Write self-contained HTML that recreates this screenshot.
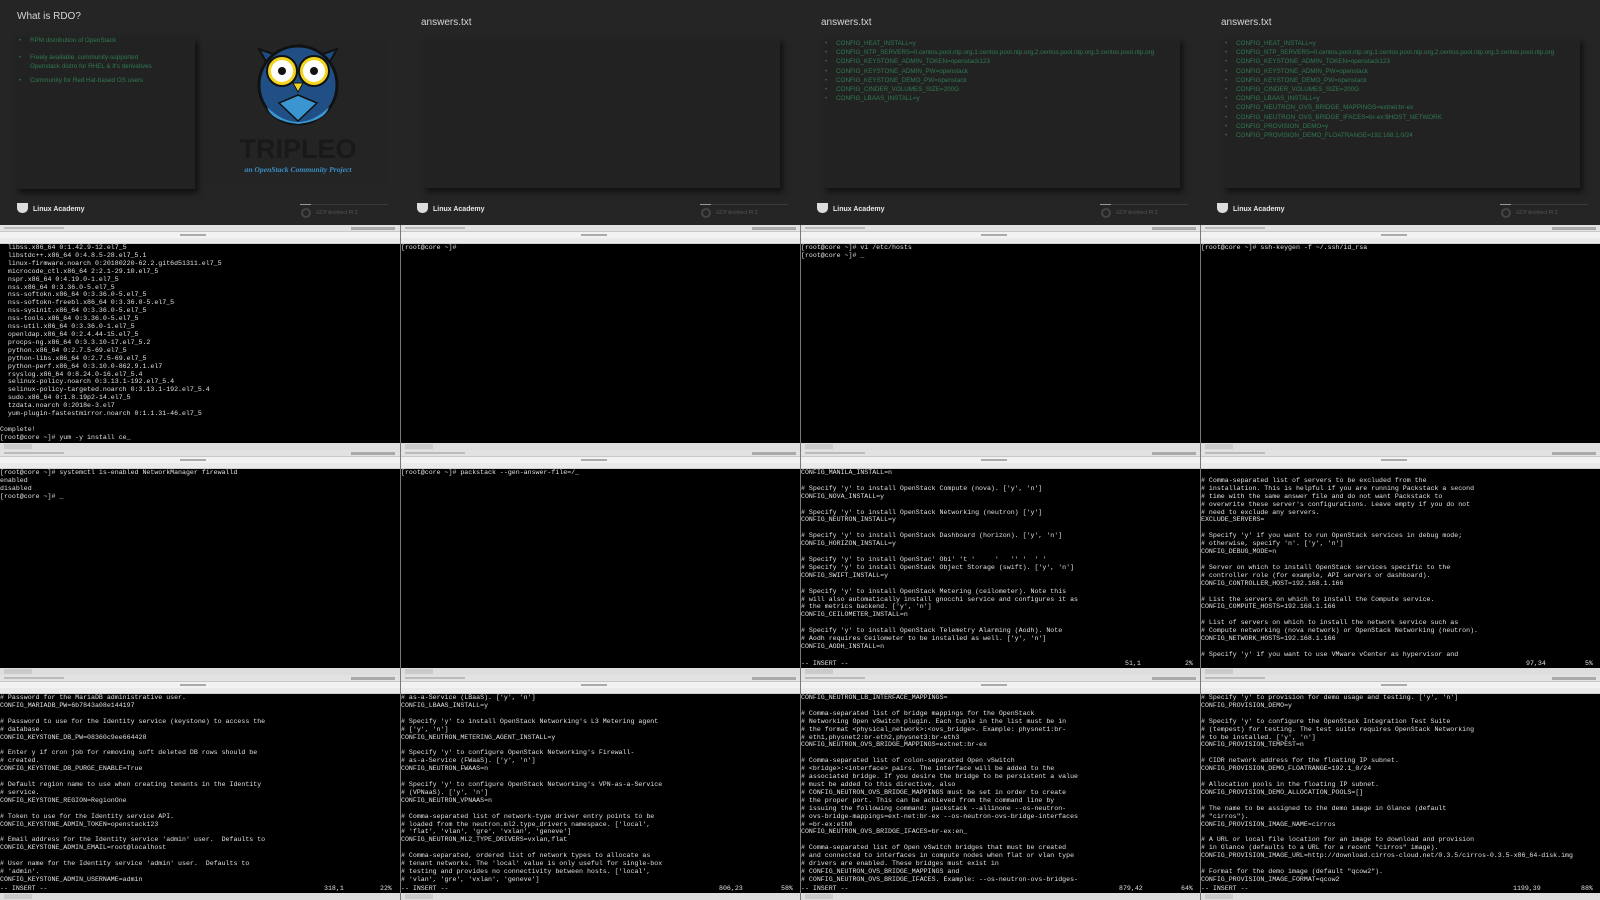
<!DOCTYPE html>
<html><head><meta charset="utf-8">
<style>
*{margin:0;padding:0;box-sizing:border-box}
body{width:1600px;height:900px;background:#000;overflow:hidden;font-family:"Liberation Sans",sans-serif;position:relative}
.cell{position:absolute;width:400px;height:225px;overflow:hidden}
.slide{background:#252525}
.title{position:absolute;left:17px;top:11px;font-size:10px;color:#d5d5d5}
.box{position:absolute;background:#222;box-shadow:3px 4px 6px rgba(0,0,0,.6)}
.bl{position:absolute;left:0;font-size:6.3px;color:#2f7a52;white-space:nowrap}
.bl:before{content:"•";position:absolute;left:-11px;color:#3a6a50}
.la{position:absolute;left:17px;top:204px;font-size:7px;font-weight:bold;color:#e8e8e8}
.la i{display:inline-block;width:11px;height:10px;background:#ddd;border-radius:0 0 5px 5px;vertical-align:middle;margin-right:5px;position:relative;top:-1px}
.gcp{position:absolute;left:300px;top:204px;width:88px;border-top:1px solid #3a3a3a}
.gcp:before{content:"";position:absolute;left:0;top:-1px;width:11px;border-top:1px solid #999}
.gcp span{position:absolute;left:16px;top:5px;font-size:5px;color:#555;white-space:nowrap}
.gcp b{position:absolute;left:1px;top:3px;width:10px;height:10px;border-radius:50%;border:2px solid #444}
.term{background:#000}
.tp{position:absolute;left:0;top:0;width:400px;height:7px;background:#e2e2e2;border-bottom:1px solid #c8c8c8}
.tt{position:absolute;left:0;top:7px;width:400px;height:6px;background:#f2f2f2}
.tm{position:absolute;left:0;top:13px;width:400px;height:6px;background:#eaeaea;border-bottom:1px solid #d0d0d0}
.tb{position:absolute;left:0;bottom:0;width:400px;height:7px;background:#dedede}
.tb:before{content:"";position:absolute;left:4px;top:1px;width:28px;height:5px;background:#cacaca}
.tt:before{content:"";position:absolute;left:180px;top:2px;width:26px;height:2px;background:#aaa}
.tp:before{content:"";position:absolute;left:4px;top:2px;width:60px;height:2px;background:#bbb}
.tp:after{content:"";position:absolute;right:5px;top:2px;width:44px;height:3px;background:#aaa}
.tx{position:absolute;left:0;top:19px;width:400px;height:199px;font-family:"Liberation Mono",monospace;font-size:6.6px;line-height:7.9px;color:#e0e0e0;white-space:pre;overflow:hidden}
.vl{border-left:1px solid #777}
.st{position:absolute;left:0;bottom:0;width:400px;height:7.9px}
.st span{position:absolute;top:0}
</style></head><body>

<!-- Row 1 slides -->
<div class="cell slide" style="left:0;top:0">
  <div class="title">What is RDO?</div>
  <div class="box" style="left:15px;top:37px;width:180px;height:152px">
    <div class="bl" style="left:15px;top:0px">RPM distribution of OpenStack</div>
    <div class="bl" style="left:15px;top:16px;line-height:9px">Freely available, community-supported<br>Openstack distro for RHEL &amp; it's derivatives</div>
    <div class="bl" style="left:15px;top:40px">Community for Red Hat-based OS users</div>
  </div>
  <div class="box" style="left:207px;top:37px;width:181px;height:152px;background:#242424;box-shadow:none">
    <svg width="181" height="152" viewBox="0 0 181 152" style="position:absolute;left:0;top:0">
      <path d="M52 12 L62 30 L80 22 Z" fill="#1d4d80" stroke="#111" stroke-width="2"/>
      <path d="M130 12 L120 30 L102 22 Z" fill="#1d4d80" stroke="#111" stroke-width="2"/>
      <circle cx="91" cy="48" r="39" fill="#1f4f85" stroke="#111" stroke-width="3"/>
      <path d="M60 70 Q91 100 122 70 Q118 84 91 87 Q64 84 60 70Z" fill="#3a95d0"/>
      <path d="M72 66 L91 84 L110 66 L91 58Z" fill="#3a95d0" stroke="#111" stroke-width="1.5"/>
      <circle cx="75" cy="34" r="15" fill="#f2d51f" stroke="#111" stroke-width="2"/>
      <circle cx="107" cy="34" r="15" fill="#f2d51f" stroke="#111" stroke-width="2"/>
      <circle cx="75" cy="34" r="11" fill="#fff"/><circle cx="107" cy="34" r="11" fill="#fff"/>
      <circle cx="75" cy="34" r="4" fill="#111"/><circle cx="107" cy="34" r="4" fill="#111"/>
      <path d="M86 46 L96 46 L91 55Z" fill="#f2d51f" stroke="#111" stroke-width="1"/>
      <text x="91" y="121" text-anchor="middle" font-family="Liberation Sans" font-weight="bold" font-size="27" fill="#191919">TRIPLEO</text>
      <text x="91" y="135" text-anchor="middle" font-family="Liberation Serif" font-style="italic" font-weight="bold" font-size="7.6" fill="#3a8fc4">an OpenStack Community Project</text>
    </svg>
  </div>
  <div class="la"><i></i>Linux Academy</div>
  <div class="gcp"><b></b><span>GCP Architect Pt 2</span></div>
</div>

<div class="cell slide" style="left:400px;top:0">
  <div class="title" style="left:21px;top:17px">answers.txt</div>
  <div class="box" style="left:23px;top:38px;width:357px;height:150px"></div>
  <div class="la"><i></i>Linux Academy</div>
  <div class="gcp"><b></b><span>GCP Architect Pt 2</span></div>
</div>

<div class="cell slide" style="left:800px;top:0">
  <div class="title" style="left:21px;top:17px">answers.txt</div>
  <div class="box" style="left:23px;top:38px;width:357px;height:150px">
    <div style="position:absolute;left:13px;top:1px;width:340px;font-size:6.1px;line-height:9.2px;color:#2f7a52">
      <div class="bl" style="position:relative;white-space:normal">CONFIG_HEAT_INSTALL=y</div>
      <div class="bl" style="position:relative;white-space:normal">CONFIG_NTP_SERVERS=0.centos.pool.ntp.org,1.centos.pool.ntp.org,2.centos.pool.ntp.org,3.centos.pool.ntp.org</div>
      <div class="bl" style="position:relative">CONFIG_KEYSTONE_ADMIN_TOKEN=openstack123</div>
      <div class="bl" style="position:relative">CONFIG_KEYSTONE_ADMIN_PW=openstack</div>
      <div class="bl" style="position:relative">CONFIG_KEYSTONE_DEMO_PW=openstack</div>
      <div class="bl" style="position:relative">CONFIG_CINDER_VOLUMES_SIZE=200G</div>
      <div class="bl" style="position:relative">CONFIG_LBAAS_INSTALL=y</div>
    </div>
  </div>
  <div class="la"><i></i>Linux Academy</div>
  <div class="gcp"><b></b><span>GCP Architect Pt 2</span></div>
</div>

<div class="cell slide" style="left:1200px;top:0">
  <div class="title" style="left:21px;top:17px">answers.txt</div>
  <div class="box" style="left:23px;top:38px;width:357px;height:150px">
    <div style="position:absolute;left:13px;top:1px;width:340px;font-size:6.1px;line-height:9.2px;color:#2f7a52">
      <div class="bl" style="position:relative;white-space:normal">CONFIG_HEAT_INSTALL=y</div>
      <div class="bl" style="position:relative;white-space:normal">CONFIG_NTP_SERVERS=0.centos.pool.ntp.org,1.centos.pool.ntp.org,2.centos.pool.ntp.org,3.centos.pool.ntp.org</div>
      <div class="bl" style="position:relative">CONFIG_KEYSTONE_ADMIN_TOKEN=openstack123</div>
      <div class="bl" style="position:relative">CONFIG_KEYSTONE_ADMIN_PW=openstack</div>
      <div class="bl" style="position:relative">CONFIG_KEYSTONE_DEMO_PW=openstack</div>
      <div class="bl" style="position:relative">CONFIG_CINDER_VOLUMES_SIZE=200G</div>
      <div class="bl" style="position:relative">CONFIG_LBAAS_INSTALL=y</div>
      <div class="bl" style="position:relative">CONFIG_NEUTRON_OVS_BRIDGE_MAPPINGS=extnet:br-ex</div>
      <div class="bl" style="position:relative">CONFIG_NEUTRON_OVS_BRIDGE_IFACES=br-ex:$HOST_NETWORK</div>
      <div class="bl" style="position:relative">CONFIG_PROVISION_DEMO=y</div>
      <div class="bl" style="position:relative">CONFIG_PROVISION_DEMO_FLOATRANGE=192.168.1.0/24</div>
    </div>
  </div>
  <div class="la"><i></i>Linux Academy</div>
  <div class="gcp"><b></b><span>GCP Architect Pt 2</span></div>
</div>

<!-- Row 2 -->
<div class="cell term" style="left:0;top:225px"><div class="tp"></div><div class="tt"></div><div class="tm"></div>
<div class="tx">  libss.x86_64 0:1.42.9-12.el7_5
  libstdc++.x86_64 0:4.8.5-28.el7_5.1
  linux-firmware.noarch 0:20180220-62.2.git6d51311.el7_5
  microcode_ctl.x86_64 2:2.1-29.10.el7_5
  nspr.x86_64 0:4.19.0-1.el7_5
  nss.x86_64 0:3.36.0-5.el7_5
  nss-softokn.x86_64 0:3.36.0-5.el7_5
  nss-softokn-freebl.x86_64 0:3.36.0-5.el7_5
  nss-sysinit.x86_64 0:3.36.0-5.el7_5
  nss-tools.x86_64 0:3.36.0-5.el7_5
  nss-util.x86_64 0:3.36.0-1.el7_5
  openldap.x86_64 0:2.4.44-15.el7_5
  procps-ng.x86_64 0:3.3.10-17.el7_5.2
  python.x86_64 0:2.7.5-69.el7_5
  python-libs.x86_64 0:2.7.5-69.el7_5
  python-perf.x86_64 0:3.10.0-862.9.1.el7
  rsyslog.x86_64 0:8.24.0-16.el7_5.4
  selinux-policy.noarch 0:3.13.1-192.el7_5.4
  selinux-policy-targeted.noarch 0:3.13.1-192.el7_5.4
  sudo.x86_64 0:1.8.19p2-14.el7_5
  tzdata.noarch 0:2018e-3.el7
  yum-plugin-fastestmirror.noarch 0:1.1.31-46.el7_5

Complete!
[root@core ~]# yum -y install ce_</div><div class="tb"></div></div>

<div class="cell term vl" style="left:400px;top:225px"><div class="tp"></div><div class="tt"></div><div class="tm"></div>
<div class="tx">[root@core ~]#</div><div class="tb"></div></div>

<div class="cell term vl" style="left:800px;top:225px"><div class="tp"></div><div class="tt"></div><div class="tm"></div>
<div class="tx">[root@core ~]# vi /etc/hosts
[root@core ~]# _</div><div class="tb"></div></div>

<div class="cell term vl" style="left:1200px;top:225px"><div class="tp"></div><div class="tt"></div><div class="tm"></div>
<div class="tx">[root@core ~]# ssh-keygen -f ~/.ssh/id_rsa</div><div class="tb"></div></div>

<!-- Row 3 -->
<div class="cell term" style="left:0;top:450px"><div class="tp"></div><div class="tt"></div><div class="tm"></div>
<div class="tx">[root@core ~]# systemctl is-enabled NetworkManager firewalld
enabled
disabled
[root@core ~]# _</div><div class="tb"></div></div>

<div class="cell term vl" style="left:400px;top:450px"><div class="tp"></div><div class="tt"></div><div class="tm"></div>
<div class="tx">[root@core ~]# packstack --gen-answer-file=/_</div><div class="tb"></div></div>

<div class="cell term vl" style="left:800px;top:450px"><div class="tp"></div><div class="tt"></div><div class="tm"></div>
<div class="tx">CONFIG_MANILA_INSTALL=n

# Specify 'y' to install OpenStack Compute (nova). ['y', 'n']
CONFIG_NOVA_INSTALL=y

# Specify 'y' to install OpenStack Networking (neutron) ['y']
CONFIG_NEUTRON_INSTALL=y

# Specify 'y' to install OpenStack Dashboard (horizon). ['y', 'n']
CONFIG_HORIZON_INSTALL=y

# Specify 'y' to install OpenStac' Obi' 't '     '   '' '  ' '
# Specify 'y' to install OpenStack Object Storage (swift). ['y', 'n']
CONFIG_SWIFT_INSTALL=y

# Specify 'y' to install OpenStack Metering (ceilometer). Note this
# will also automatically install gnocchi service and configures it as
# the metrics backend. ['y', 'n']
CONFIG_CEILOMETER_INSTALL=n

# Specify 'y' to install OpenStack Telemetry Alarming (Aodh). Note
# Aodh requires Ceilometer to be installed as well. ['y', 'n']
CONFIG_AODH_INSTALL=n
<div class="st"><span style="left:0">-- INSERT --</span><span style="left:324px">51,1</span><span style="left:384px">2%</span></div></div><div class="tb"></div></div>

<div class="cell term vl" style="left:1200px;top:450px"><div class="tp"></div><div class="tt"></div><div class="tm"></div>
<div class="tx">
# Comma-separated list of servers to be excluded from the
# installation. This is helpful if you are running Packstack a second
# time with the same answer file and do not want Packstack to
# overwrite these server's configurations. Leave empty if you do not
# need to exclude any servers.
EXCLUDE_SERVERS=

# Specify 'y' if you want to run OpenStack services in debug mode;
# otherwise, specify 'n'. ['y', 'n']
CONFIG_DEBUG_MODE=n

# Server on which to install OpenStack services specific to the
# controller role (for example, API servers or dashboard).
CONFIG_CONTROLLER_HOST=192.168.1.166

# List the servers on which to install the Compute service.
CONFIG_COMPUTE_HOSTS=192.168.1.166

# List of servers on which to install the network service such as
# Compute networking (nova network) or OpenStack Networking (neutron).
CONFIG_NETWORK_HOSTS=192.168.1.166

# Specify 'y' if you want to use VMware vCenter as hypervisor and
<div class="st"><span style="left:325px">97,34</span><span style="left:384px">5%</span></div></div><div class="tb"></div></div>

<!-- Row 4 -->
<div class="cell term" style="left:0;top:675px"><div class="tp"></div><div class="tt"></div><div class="tm"></div>
<div class="tx"># Password for the MariaDB administrative user.
CONFIG_MARIADB_PW=6b7843a08e144197

# Password to use for the Identity service (keystone) to access the
# database.
CONFIG_KEYSTONE_DB_PW=08360c9ee664428

# Enter y if cron job for removing soft deleted DB rows should be
# created.
CONFIG_KEYSTONE_DB_PURGE_ENABLE=True

# Default region name to use when creating tenants in the Identity
# service.
CONFIG_KEYSTONE_REGION=RegionOne

# Token to use for the Identity service API.
CONFIG_KEYSTONE_ADMIN_TOKEN=openstack123

# Email address for the Identity service 'admin' user.  Defaults to
CONFIG_KEYSTONE_ADMIN_EMAIL=root@localhost

# User name for the Identity service 'admin' user.  Defaults to
# 'admin'.
CONFIG_KEYSTONE_ADMIN_USERNAME=admin
<div class="st"><span style="left:0">-- INSERT --</span><span style="left:324px">318,1</span><span style="left:380px">22%</span></div></div><div class="tb"></div></div>

<div class="cell term vl" style="left:400px;top:675px"><div class="tp"></div><div class="tt"></div><div class="tm"></div>
<div class="tx"># as-a-Service (LBaaS). ['y', 'n']
CONFIG_LBAAS_INSTALL=y

# Specify 'y' to install OpenStack Networking's L3 Metering agent
# ['y', 'n']
CONFIG_NEUTRON_METERING_AGENT_INSTALL=y

# Specify 'y' to configure OpenStack Networking's Firewall-
# as-a-Service (FWaaS). ['y', 'n']
CONFIG_NEUTRON_FWAAS=n

# Specify 'y' to configure OpenStack Networking's VPN-as-a-Service
# (VPNaaS). ['y', 'n']
CONFIG_NEUTRON_VPNAAS=n

# Comma-separated list of network-type driver entry points to be
# loaded from the neutron.ml2.type_drivers namespace. ['local',
# 'flat', 'vlan', 'gre', 'vxlan', 'geneve']
CONFIG_NEUTRON_ML2_TYPE_DRIVERS=vxlan,flat

# Comma-separated, ordered list of network types to allocate as
# tenant networks. The 'local' value is only useful for single-box
# testing and provides no connectivity between hosts. ['local',
# 'vlan', 'gre', 'vxlan', 'geneve']
<div class="st"><span style="left:0">-- INSERT --</span><span style="left:318px">806,23</span><span style="left:380px">58%</span></div></div><div class="tb"></div></div>

<div class="cell term vl" style="left:800px;top:675px"><div class="tp"></div><div class="tt"></div><div class="tm"></div>
<div class="tx">CONFIG_NEUTRON_LB_INTERFACE_MAPPINGS=

# Comma-separated list of bridge mappings for the OpenStack
# Networking Open vSwitch plugin. Each tuple in the list must be in
# the format &lt;physical_network&gt;:&lt;ovs_bridge&gt;. Example: physnet1:br-
# eth1,physnet2:br-eth2,physnet3:br-eth3
CONFIG_NEUTRON_OVS_BRIDGE_MAPPINGS=extnet:br-ex

# Comma-separated list of colon-separated Open vSwitch
# &lt;bridge&gt;:&lt;interface&gt; pairs. The interface will be added to the
# associated bridge. If you desire the bridge to be persistent a value
# must be added to this directive, also
# CONFIG_NEUTRON_OVS_BRIDGE_MAPPINGS must be set in order to create
# the proper port. This can be achieved from the command line by
# issuing the following command: packstack --allinone --os-neutron-
# ovs-bridge-mappings=ext-net:br-ex --os-neutron-ovs-bridge-interfaces
# =br-ex:eth0
CONFIG_NEUTRON_OVS_BRIDGE_IFACES=br-ex:en_

# Comma-separated list of Open vSwitch bridges that must be created
# and connected to interfaces in compute nodes when flat or vlan type
# drivers are enabled. These bridges must exist in
# CONFIG_NEUTRON_OVS_BRIDGE_MAPPINGS and
# CONFIG_NEUTRON_OVS_BRIDGE_IFACES. Example: --os-neutron-ovs-bridges-
<div class="st"><span style="left:0">-- INSERT --</span><span style="left:318px">879,42</span><span style="left:380px">64%</span></div></div><div class="tb"></div></div>

<div class="cell term vl" style="left:1200px;top:675px"><div class="tp"></div><div class="tt"></div><div class="tm"></div>
<div class="tx"># Specify 'y' to provision for demo usage and testing. ['y', 'n']
CONFIG_PROVISION_DEMO=y

# Specify 'y' to configure the OpenStack Integration Test Suite
# (tempest) for testing. The test suite requires OpenStack Networking
# to be installed. ['y', 'n']
CONFIG_PROVISION_TEMPEST=n

# CIDR network address for the floating IP subnet.
CONFIG_PROVISION_DEMO_FLOATRANGE=192.1_0/24

# Allocation pools in the floating IP subnet.
CONFIG_PROVISION_DEMO_ALLOCATION_POOLS=[]

# The name to be assigned to the demo image in Glance (default
# "cirros").
CONFIG_PROVISION_IMAGE_NAME=cirros

# A URL or local file location for an image to download and provision
# in Glance (defaults to a URL for a recent "cirros" image).
CONFIG_PROVISION_IMAGE_URL=http://download.cirros-cloud.net/0.3.5/cirros-0.3.5-x86_64-disk.img

# Format for the demo image (default "qcow2").
CONFIG_PROVISION_IMAGE_FORMAT=qcow2
<div class="st"><span style="left:0">-- INSERT --</span><span style="left:312px">1199,39</span><span style="left:380px">88%</span></div></div><div class="tb"></div></div>

</body></html>
